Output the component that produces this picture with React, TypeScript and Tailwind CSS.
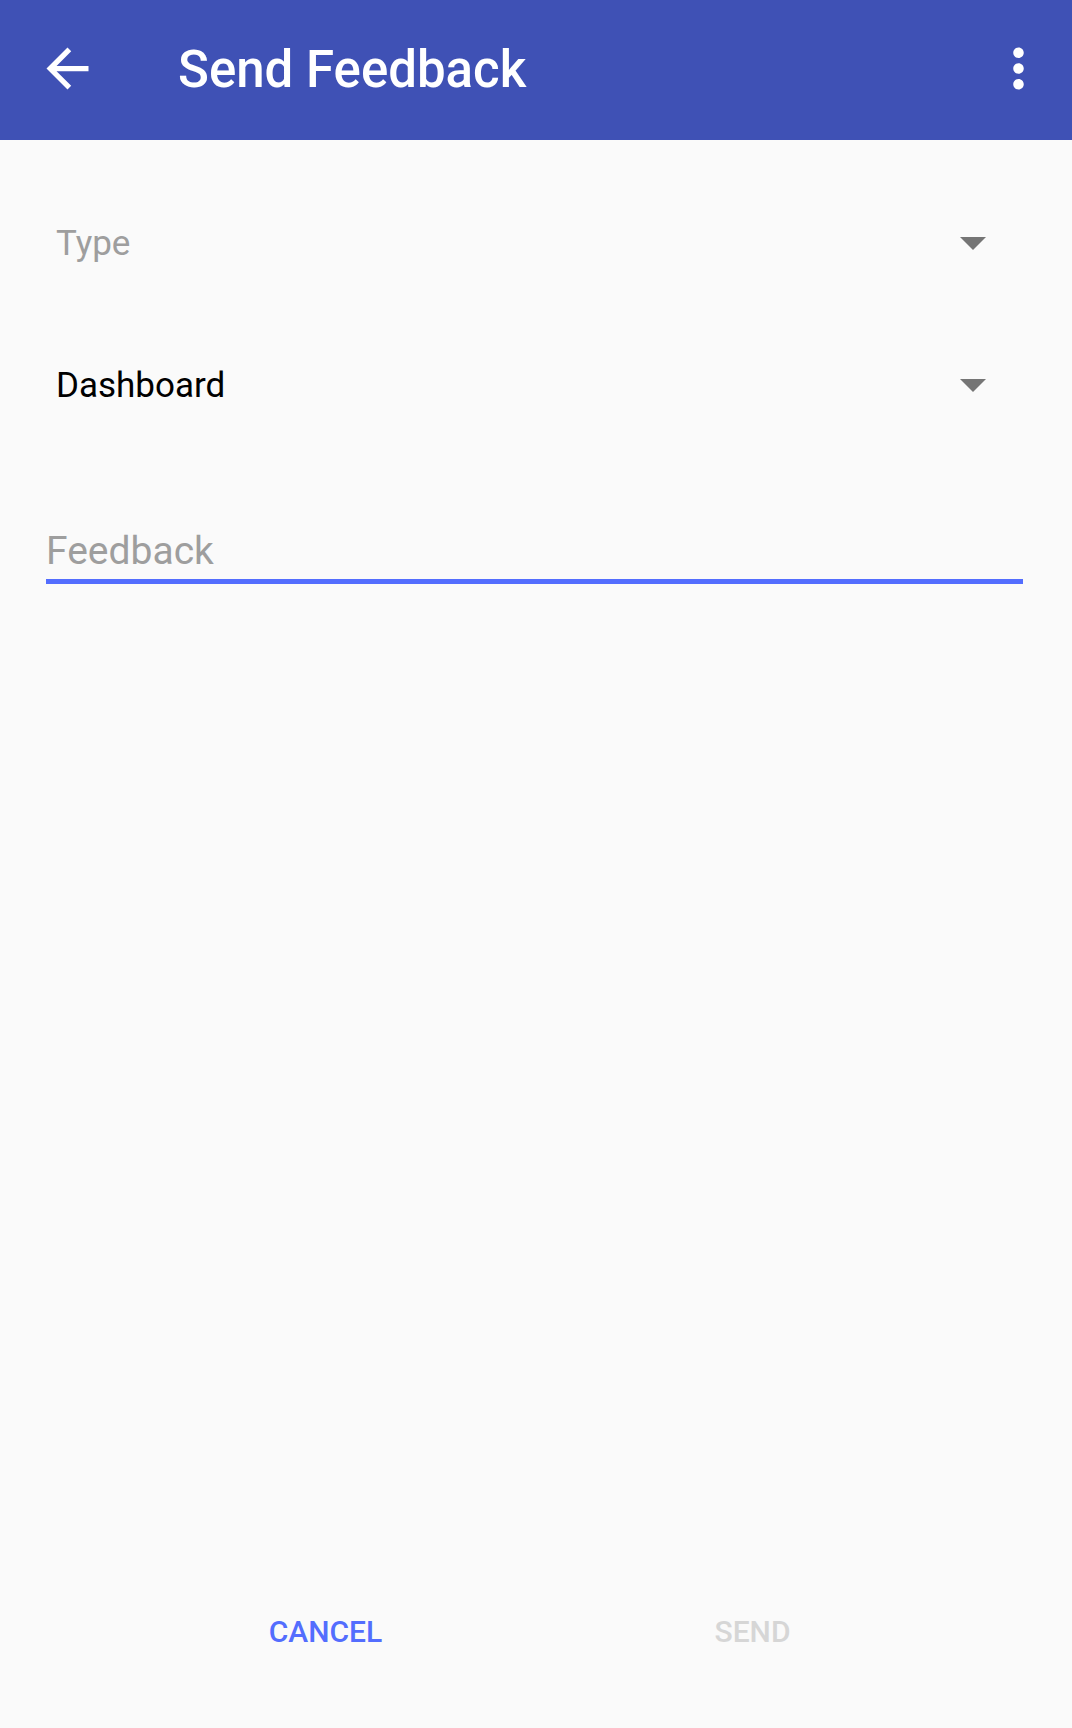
import React from "react";

function Triangle() {
  return (
    <svg width="26" height="13" viewBox="0 0 26 13" className="block">
      <polygon points="0,0 26,0 13,13" fill="#757575" />
    </svg>
  );
}

export default function App() {
  return (
    <div
      className="w-[1072px] min-h-[1728px] bg-[#fafafa] flex flex-col"
      style={{ fontFamily: "Roboto, 'Noto Sans', sans-serif" }}
    >
      <header className="h-[140px] bg-[#3f51b5] flex items-center pl-[36px] pr-[22px]">
        <svg width="63" height="63" viewBox="0 0 24 24" className="block -mt-[4px]">
          <path
            d="M20 11H7.83l5.59-5.59L12 4l-8 8 8 8 1.41-1.41L7.83 13H20v-2z"
            fill="#ffffff"
          />
        </svg>
        <h1 className="ml-[79px] text-white text-[51px] leading-none font-medium flex-1 -mt-[2px]">
          Send Feedback
        </h1>
        <svg width="63" height="63" viewBox="0 0 24 24" className="block -mt-[4px]">
          <path
            d="M12 8c1.1 0 2-.9 2-2s-.9-2-2-2-2 .9-2 2 .9 2 2 2zm0 2c-1.1 0-2 .9-2 2s.9 2 2 2 2-.9 2-2-.9-2-2-2zm0 6c-1.1 0-2 .9-2 2s.9 2 2 2 2-.9 2-2-.9-2-2-2z"
            fill="#ffffff"
          />
        </svg>
      </header>

      <div className="flex flex-col">
        <div className="mt-[71px] h-[64px] flex items-center justify-between pl-[56px] pr-[86px]">
          <span className="text-[35px] leading-none text-[#9e9e9e]">Type</span>
          <Triangle />
        </div>
        <div className="mt-[78px] h-[64px] flex items-center justify-between pl-[56px] pr-[86px]">
          <span className="text-[35px] leading-none text-black">Dashboard</span>
          <Triangle />
        </div>
        <div className="mt-[114px] ml-[46px] mr-[49px] border-b-[5px] border-[#536dfe] pb-[8px]">
          <span className="block text-[39px] leading-[40px] text-[#9e9e9e]">Feedback</span>
        </div>
      </div>

      <div className="flex-1" />

      <div className="h-[96px] mb-[48px] grid grid-cols-2 pl-[112px] pr-[106px] items-center">
        <div className="flex justify-center">
          <span className="text-[30px] leading-none font-medium text-[#536dfe]">CANCEL</span>
        </div>
        <div className="flex justify-center">
          <span className="text-[30px] leading-none font-medium text-[#d6d6d6]">SEND</span>
        </div>
      </div>
    </div>
  );
}
